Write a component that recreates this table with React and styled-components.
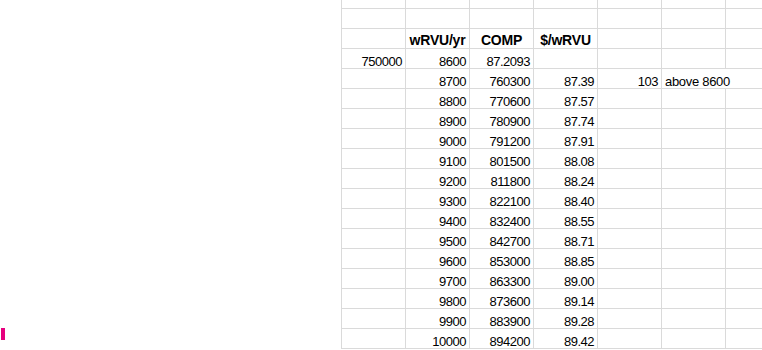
import React from "react";
import styled, { createGlobalStyle } from "styled-components";

const rows = [
  [8700, 760300, "87.39"],
  [8800, 770600, "87.57"],
  [8900, 780900, "87.74"],
  [9000, 791200, "87.91"],
  [9100, 801500, "88.08"],
  [9200, 811800, "88.24"],
  [9300, 822100, "88.40"],
  [9400, 832400, "88.55"],
  [9500, 842700, "88.71"],
  [9600, 853000, "88.85"],
  [9700, 863300, "89.00"],
  [9800, 873600, "89.14"],
  [9900, 883900, "89.28"],
  [10000, 894200, "89.42"],
];

export default function App() {
  return (
    <>
      <GlobalStyle />
      <Page>
        <LeftPane>
          <Marker />
        </LeftPane>
        <Sheet>
          {/* partial row cut off at the top, and an empty row */}
          {Array.from({ length: 7 }).map((_, i) => (
            <Cell key={"t" + i} />
          ))}
          {Array.from({ length: 7 }).map((_, i) => (
            <Cell key={"e" + i} />
          ))}

          {/* header row */}
          <Cell />
          <HeadCell>wRVU/yr</HeadCell>
          <HeadCell>COMP</HeadCell>
          <HeadCell>$/wRVU</HeadCell>
          <Cell />
          <Cell />
          <Cell />

          {/* first row with the base salary */}
          <NumCell>750000</NumCell>
          <NumCell>8600</NumCell>
          <NumCell>87.2093</NumCell>
          <Cell />
          <Cell />
          <Cell />
          <Cell />

          {rows.map(([wrvu, comp, rate], i) => (
            <React.Fragment key={wrvu}>
              <Cell />
              <NumCell>{wrvu}</NumCell>
              <NumCell>{comp}</NumCell>
              <NumCell>{rate}</NumCell>
              {i === 0 ? (
                <>
                  <NumCell>103</NumCell>
                  <TextCell $span={2}>above 8600</TextCell>
                </>
              ) : (
                <>
                  <Cell />
                  <Cell />
                  <Cell />
                </>
              )}
            </React.Fragment>
          ))}
        </Sheet>
      </Page>
    </>
  );
}

const GlobalStyle = createGlobalStyle`
  html, body {
    margin: 0;
    padding: 0;
    background: #ffffff;
    overflow: hidden;
  }
`;

const Page = styled.div`
  display: flex;
  width: 762px;
  height: 350px;
  overflow: hidden;
  background: #ffffff;
  font-family: "Liberation Sans", Arial, sans-serif;
  font-size: 13px;
  letter-spacing: -0.5px;
  color: #000000;
`;

const LeftPane = styled.div`
  flex: 0 0 341px;
  display: flex;
  flex-direction: column;
  justify-content: flex-end;
  padding: 0 0 10px 1px;
  box-sizing: border-box;
`;

const Marker = styled.div`
  width: 4px;
  height: 12px;
  background: #e6007e;
`;

const Sheet = styled.div`
  flex: 0 0 auto;
  display: grid;
  grid-template-columns: repeat(7, 64px);
  grid-template-rows: 9px;
  grid-auto-rows: 20px;
  align-content: start;
`;

const Cell = styled.div`
  box-sizing: border-box;
  border-left: 1px solid #dadada;
  border-bottom: 1px solid #dadada;
  display: flex;
  align-items: flex-end;
  padding: 0 3px 0 3px;
  white-space: nowrap;
  line-height: 1;
  grid-column: ${(p) => (p.$span ? `span ${p.$span}` : "auto")};
`;

const NumCell = styled(Cell)`
  justify-content: flex-end;
`;

const TextCell = styled(Cell)`
  justify-content: flex-start;
  padding-left: 3px;
  letter-spacing: -0.3px;
`;

const HeadCell = styled(Cell)`
  justify-content: center;
  padding-bottom: 1px;
  font-weight: bold;
  font-size: 14px;
  letter-spacing: -0.2px;
`;
